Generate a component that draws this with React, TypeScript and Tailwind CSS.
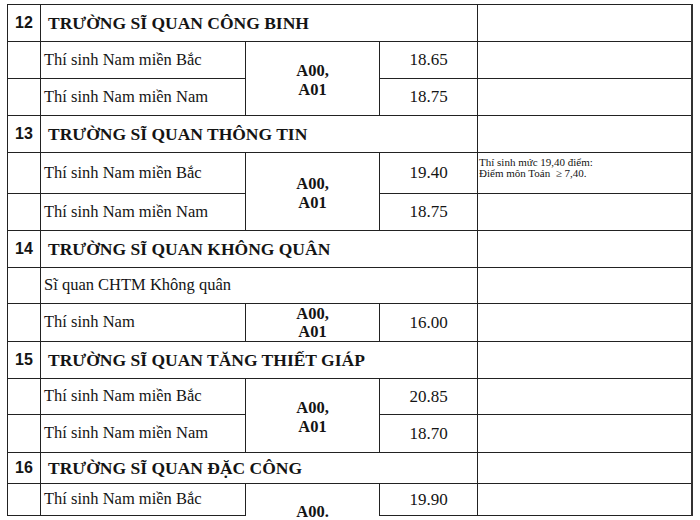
import React from 'react'

type Row = { name: string; score: string; h: number; note?: string[] }
type Section = {
  no: string
  title: string
  headH: number
  sub?: { name: string; h: number }
  code: string[]
  codeTail?: boolean
  rows: Row[]
}

const sections: Section[] = [
  {
    no: '12',
    title: 'TRƯỜNG SĨ QUAN CÔNG BINH',
    headH: 37,
    code: ['A00,', 'A01'],
    rows: [
      { name: 'Thí sinh Nam miền Bắc', score: '18.65', h: 37 },
      { name: 'Thí sinh Nam miền Nam', score: '18.75', h: 37 },
    ],
  },
  {
    no: '13',
    title: 'TRƯỜNG SĨ QUAN THÔNG TIN',
    headH: 37,
    code: ['A00,', 'A01'],
    rows: [
      {
        name: 'Thí sinh Nam miền Bắc',
        score: '19.40',
        h: 41,
        note: ['Thí sinh mức 19,40 điểm:', 'Điểm môn Toán  ≥ 7,40.'],
      },
      { name: 'Thí sinh Nam miền Nam', score: '18.75', h: 37 },
    ],
  },
  {
    no: '14',
    title: 'TRƯỜNG SĨ QUAN KHÔNG QUÂN',
    headH: 37,
    sub: { name: 'Sĩ quan CHTM Không quân', h: 36 },
    code: ['A00,', 'A01'],
    rows: [{ name: 'Thí sinh Nam', score: '16.00', h: 38 }],
  },
  {
    no: '15',
    title: 'TRƯỜNG SĨ QUAN TĂNG THIẾT GIÁP',
    headH: 37,
    code: ['A00,', 'A01'],
    rows: [
      { name: 'Thí sinh Nam miền Bắc', score: '20.85', h: 36 },
      { name: 'Thí sinh Nam miền Nam', score: '18.70', h: 38 },
    ],
  },
  {
    no: '16',
    title: 'TRƯỜNG SĨ QUAN ĐẶC CÔNG',
    headH: 31,
    code: ['A00.'],
    codeTail: true,
    rows: [{ name: 'Thí sinh Nam miền Bắc', score: '19.90', h: 32 }],
  },
]

const cell = "border border-[#222] p-0 font-['Liberation_Serif']"

export default function App() {
  return (
    <div className="w-[700px] h-[520px] overflow-hidden bg-white pl-[7px] pt-[4px] text-[#141414] font-['Liberation_Serif']">
      <table className="table-fixed border-collapse w-[684px]">
        <colgroup>
          <col className="w-[33px]" />
          <col className="w-[205px]" />
          <col className="w-[134px]" />
          <col className="w-[98px]" />
          <col className="w-[214px]" />
        </colgroup>
        <tbody>
          {sections.map((s) => {
            const out: React.ReactNode[] = []
            out.push(
              <tr key={s.no + 'h'} style={{ height: s.headH }}>
                <td className="border border-[#222] p-0 text-center font-['Liberation_Sans'] font-bold text-[16px]">{s.no}</td>
                <td colSpan={3} className={`${cell} pl-[7px] font-bold text-[17.5px] whitespace-nowrap`}>
                  {s.title}
                </td>
                <td className={`${cell} border-r-2 border-r-[#333]`}></td>
              </tr>
            )
            if (s.sub) {
              out.push(
                <tr key={s.no + 's'} style={{ height: s.sub.h }}>
                  <td className={cell}></td>
                  <td colSpan={3} className={`${cell} pl-[3px] text-[16.5px] whitespace-nowrap`}>
                    {s.sub.name}
                  </td>
                  <td className={`${cell} border-r-2 border-r-[#333]`}></td>
                </tr>
              )
            }
            s.rows.forEach((r, i) => {
              out.push(
                <tr key={s.no + 'r' + i} style={{ height: r.h }}>
                  <td className={cell}></td>
                  <td className={`${cell} pl-[3px] text-[16.5px] whitespace-nowrap`}>{r.name}</td>
                  {i === 0 &&
                    (s.codeTail ? (
                      <td rowSpan={s.rows.length} className="border-x border-[#222] p-0 align-top font-['Liberation_Serif']">
                        <div className="h-[31px] text-center font-bold text-[16.5px] leading-[18px] pt-[19px]">
                          {s.code[0]}
                        </div>
                      </td>
                    ) : (
                      <td
                        rowSpan={s.rows.length}
                        className={`${cell} text-center font-bold text-[16.5px] ${s.rows.length === 1 ? 'leading-[18px] pt-[1px]' : 'leading-[19px] pt-[2px]'}`}
                      >
                        {s.code.map((c) => (
                          <div key={c}>{c}</div>
                        ))}
                      </td>
                    ))}
                  <td className={`${cell} text-center text-[17px]`}>{r.score}</td>
                  <td className={`${cell} border-r-2 border-r-[#333] align-top pl-[1px] pt-[4px] text-[11px] leading-[11px]`}>
                    {r.note?.map((n) => (
                      <div key={n} className="whitespace-pre">
                        {n}
                      </div>
                    ))}
                  </td>
                </tr>
              )
            })
            return out
          })}
        </tbody>
      </table>
    </div>
  )
}
